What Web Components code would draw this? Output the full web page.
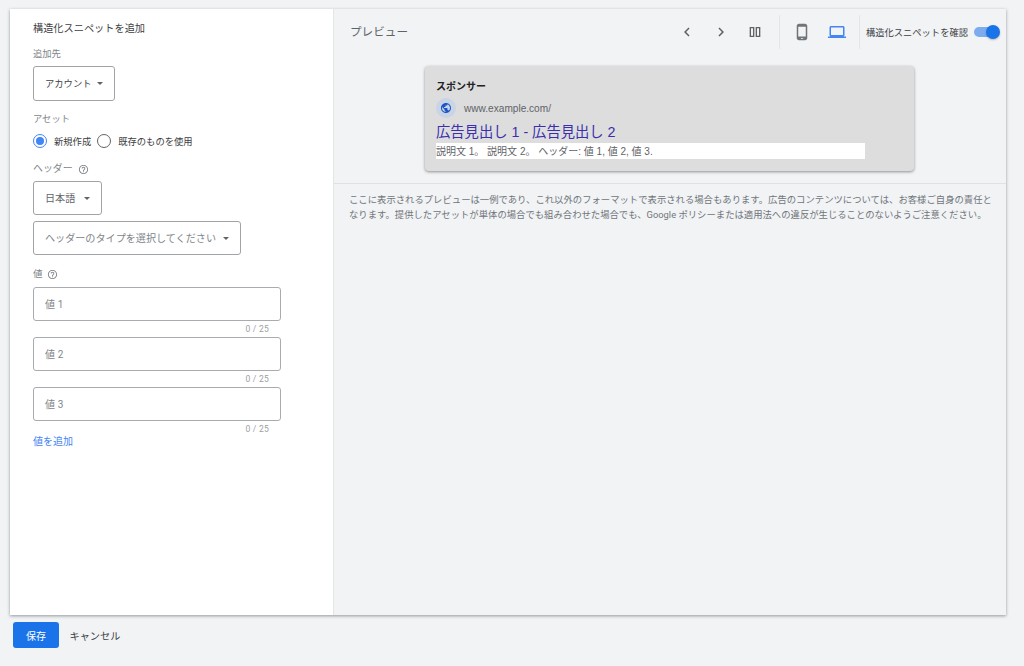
<!DOCTYPE html>
<html lang="ja"><head><meta charset="utf-8"><title>構造化スニペット</title>
<style>
html,body{margin:0;height:666px;overflow:hidden;background:#f1f3f5;font-family:Roboto,"Noto Sans CJK JP",sans-serif;}
</style></head><body>
<snippet-app></snippet-app>
<script>
const FONT='Roboto,"Noto Sans CJK JP",sans-serif';
const def=(n,html)=>{customElements.define(n,class extends HTMLElement{connectedCallback(){if(this.shadowRoot)return;const r=this.attachShadow({mode:'open'});r.innerHTML=typeof html==='function'?html(this):html;}})};

def('x-help',`<style>:host{display:inline-flex;margin-left:var(--ml,5px)}svg{display:block}</style>
<svg width="11" height="11" viewBox="0 0 24 24" fill="#80868b"><path d="M11 18h2v-2h-2v2zm1-16C6.48 2 2 6.48 2 12s4.48 10 10 10 10-4.48 10-10S17.52 2 12 2zm0 18c-4.41 0-8-3.59-8-8s3.59-8 8-8 8 3.59 8 8-3.59 8-8 8zm0-14c-2.21 0-4 1.79-4 4h2c0-1.1.9-2 2-2s2 .9 2 2c0 2-3 1.75-3 5h2c0-2.25 3-2.5 3-5 0-2.21-1.79-4-4-4z"/></svg>`);

def('x-label',`<style>:host{display:flex;align-items:center;height:14px;font-size:var(--fs,9.3px);line-height:14px;color:#80868b}</style><slot></slot>`);

def('x-select',`<style>:host{display:flex;box-sizing:border-box;align-items:center;height:var(--h,35px);width:var(--w,82px);border:1px solid #a0a4a8;border-radius:3px;padding:0 11px;font-size:var(--fs,10.1px);color:var(--c,#5f6368);background:#fff}
.t{flex:1;white-space:nowrap;padding-bottom:2px}i{width:0;height:0;border:3px solid transparent;border-top:3.5px solid #5f6368;border-bottom:0}</style><span class="t"><slot></slot></span><i></i>`);

def('x-radio',e=>{const on=e.hasAttribute('on');return `<style>:host{display:inline-flex;align-items:center;font-size:9.3px;color:#3c4043;white-space:nowrap}
.r{box-sizing:border-box;width:14px;height:14px;border-radius:50%;border:1.5px solid ${on?'#4285f4':'#5f6368'};margin-right:7px;display:flex;align-items:center;justify-content:center}
.r b{width:8px;height:8px;border-radius:50%;background:${on?'#4285f4':'transparent'}}</style><span class="r"><b></b></span><slot></slot>`});

def('x-field',`<style>:host{display:block;width:248px;height:50px}
.b{box-sizing:border-box;height:34px;border:1px solid #a8abaf;border-radius:3px;background:#fff;display:flex;align-items:center;padding:0 0 2px 11px;font-size:10px;color:#80868b;letter-spacing:.1px}
.c{height:16px;line-height:16px;font-size:8.5px;color:#9aa0a6;text-align:right;padding-right:12px;letter-spacing:.25px}</style><div class="b"><slot></slot></div><div class="c">0 / 25</div>`);

def('x-icon',e=>`<style>:host{display:flex;align-items:center;justify-content:center;width:24px;height:24px}svg{display:block}</style>
<svg width="${e.getAttribute('s')||18}" height="${e.getAttribute('s')||18}" viewBox="0 0 24 24" fill="${e.getAttribute('c')||'#5f6368'}" fill-rule="evenodd"><path d="${e.getAttribute('d')}"/></svg>`);

def('x-toggle',`<style>:host{display:block;position:relative;width:26px;height:14px}
.t{position:absolute;left:0;right:1px;top:2px;height:10px;border-radius:5px;background:#7dabef}
.k{position:absolute;right:0;top:0;width:14px;height:14px;border-radius:50%;background:#1a73e8;box-shadow:0 1px 2px rgba(0,0,0,.25)}</style><div class="t"></div><div class="k"></div>`);

def('x-vline',`<style>:host{display:block;width:1px;height:34px;background:#e4e6e8}</style>`);

def('x-ad-card',`<style>:host{display:block;box-sizing:border-box;width:489px;height:105px;background:#dddddd;border-radius:4px;box-shadow:0 1px 3px rgba(60,64,67,.55);padding:13px 12px 0 11px}
.sp{font-size:10px;line-height:16px;font-weight:700;color:#202124;height:16px}
.u{display:flex;align-items:center;height:20px;margin-top:3px;font-size:10.1px;color:#5f6368;font-family:"Liberation Sans","Noto Sans CJK JP",sans-serif}
.g{width:20px;height:20px;border-radius:50%;background:#c9d4e6;margin-right:8px;display:flex;align-items:center;justify-content:center}
.h{font-size:14.3px;line-height:20px;height:20px;margin-top:4px;color:#3b2fae;white-space:nowrap;font-family:"Liberation Sans","Noto Sans CJK JP",sans-serif}
.d{width:429px;height:16px;line-height:17px;background:#fff;font-size:10px;color:#5f6368;margin-top:1px;white-space:nowrap;font-family:"Liberation Sans","Noto Sans CJK JP",sans-serif}</style>
<div class="sp">スポンサー</div>
<div class="u"><span class="g"><svg width="12" height="12" viewBox="0 0 24 24" fill="#1a56c4"><path d="M12 2C6.48 2 2 6.48 2 12s4.48 10 10 10 10-4.48 10-10S17.52 2 12 2zm-1 17.93C7.05 19.44 4 16.08 4 12c0-.62.08-1.21.21-1.79L9 15v1c0 1.1.9 2 2 2v1.93zm6.9-2.54c-.26-.81-1-1.39-1.9-1.39h-1v-3c0-.55-.45-1-1-1H8v-2h2c.55 0 1-.45 1-1V7h2c1.1 0 2-.9 2-2v-.41c2.93 1.19 5 4.06 5 7.41 0 2.08-.8 3.97-2.1 5.39z"/></svg></span>www.example.com/</div>
<div class="h">広告見出し 1 - 広告見出し 2</div>
<div class="d">説明文 1。 説明文 2。 ヘッダー: 値 1, 値 2, 値 3.</div>`);

def('left-panel',`<style>:host{display:block;box-sizing:border-box;width:324px;height:100%;background:#fff;border-right:1px solid #e3e5e7;padding:12px 0 0 23px}
.title{font-size:10.2px;line-height:16px;height:16px;color:#3c4043;white-space:nowrap}
.radios{display:flex;gap:6px;margin-top:7px;height:16px;align-items:center}
</style>
<div class="title">構造化スニペットを追加</div>
<x-label style="margin-top:10px">追加先</x-label>
<x-select style="margin-top:5px;--w:82px;--fs:9.3px;--c:#3c4043">アカウント</x-select>
<x-label style="margin-top:11px">アセット</x-label>
<div class="radios"><x-radio on>新規作成</x-radio><x-radio>既存のものを使用</x-radio></div>
<x-label style="margin-top:13px;--fs:9.9px">ヘッダー<x-help></x-help></x-label>
<x-select style="margin-top:5px;--w:69px;--h:34px">日本語</x-select>
<x-select style="margin-top:6px;--w:208px;--h:34px;--c:#80868b">ヘッダーのタイプを選択してください</x-select>
<x-label style="margin-top:12px;--fs:9.5px;--ml:4px">値<x-help></x-help></x-label>
<div style="margin-top:6px"><x-field>値 1</x-field><x-field>値 2</x-field><x-field>値 3</x-field></div>
<div style="font-size:10px;line-height:14px;color:#4285f4;margin-top:-2px">値を追加</div>`);

const chevL="M15.41 7.41 14 6l-6 6 6 6 1.41-1.41L10.83 12z",chevR="M8.59 16.59 10 18l6-6-6-6-1.41 1.41L13.17 12z",cols="M4 4.5h7v15H4zM6 6.5v11h3v-11zM13 4.5h7v15h-7zM15 6.5v11h3v-11z";
const phone="M16 1H8C6.34 1 5 2.34 5 4v16c0 1.66 1.34 3 3 3h8c1.66 0 3-1.34 3-3V4c0-1.66-1.34-3-3-3zM7 5v13h10V5zM10.5 20v1h3v-1z";
const laptop="M20 18c1.1 0 2-.9 2-2V6c0-1.1-.9-2-2-2H4c-1.1 0-2 .9-2 2v10c0 1.1.9 2 2 2H0v2h24v-2h-4zM4 6v10h16V6z";

def('preview-panel',`<style>:host{display:flex;flex-direction:column;flex:1;min-width:0;height:100%}
.bar{display:flex;align-items:center;height:46px;flex:none}
.tt{font-size:11.6px;color:#5f6368;margin-left:16px;flex:1;padding-bottom:2px}
.ics{display:flex;align-items:center}
.lb{flex:none;width:102px;font-size:9.27px;color:#3c4043;white-space:nowrap;margin:0 6px}
.stage{height:129px;box-sizing:border-box;flex:none;padding:11px 0 0 91px;border-bottom:1px solid #dfe1e3}
.note{padding:8px 0 0 15px;font-size:9.35px;line-height:15px;color:#70757a;white-space:nowrap}
</style>
<div class="bar"><div class="tt">プレビュー</div>
<div class="ics">
<x-icon d="${chevL}"></x-icon><x-icon d="${chevR}" style="margin-left:10px"></x-icon><x-icon d="${cols}" s="16" style="margin-left:10px"></x-icon>
<x-vline style="margin-left:12px"></x-vline>
<x-icon d="${phone}" s="18" c="#70757a" style="margin-left:10px"></x-icon><x-icon d="${laptop}" s="18" c="#4285f4" style="margin-left:11px"></x-icon>
<x-vline style="margin-left:10px"></x-vline>
<span class="lb">構造化スニペットを確認</span><x-toggle style="margin-right:6px"></x-toggle>
</div></div>
<div class="stage"><x-ad-card></x-ad-card></div>
<div class="note">ここに表示されるプレビューは一例であり、これ以外のフォーマットで表示される場合もあります。広告のコンテンツについては、お客様ご自身の責任と<br>なります。提供したアセットが単体の場合でも組み合わせた場合でも、Google ポリシーまたは適用法への違反が生じることのないようご注意ください。</div>`);

def('action-bar',`<style>:host{display:flex;align-items:center;height:26px;margin:7px 0 0 13px}
.s{width:46px;height:26px;border-radius:3px;background:#1a73e8;color:#fff;font-size:10px;display:flex;align-items:center;justify-content:center}
.c{margin-left:10.5px;font-size:10.2px;color:#3c4043}</style><div class="s">保存</div><div class="c">キャンセル</div>`);

def('snippet-app',`<style>:host{display:block;font-family:${FONT};padding-top:9px}
.card{display:flex;margin-left:10px;width:996px;height:606px;background:#f1f3f5;box-shadow:0 1px 3px rgba(60,64,67,.5)}</style>
<div class="card"><left-panel></left-panel><preview-panel></preview-panel></div><action-bar></action-bar>`);
</script>
</body></html>
